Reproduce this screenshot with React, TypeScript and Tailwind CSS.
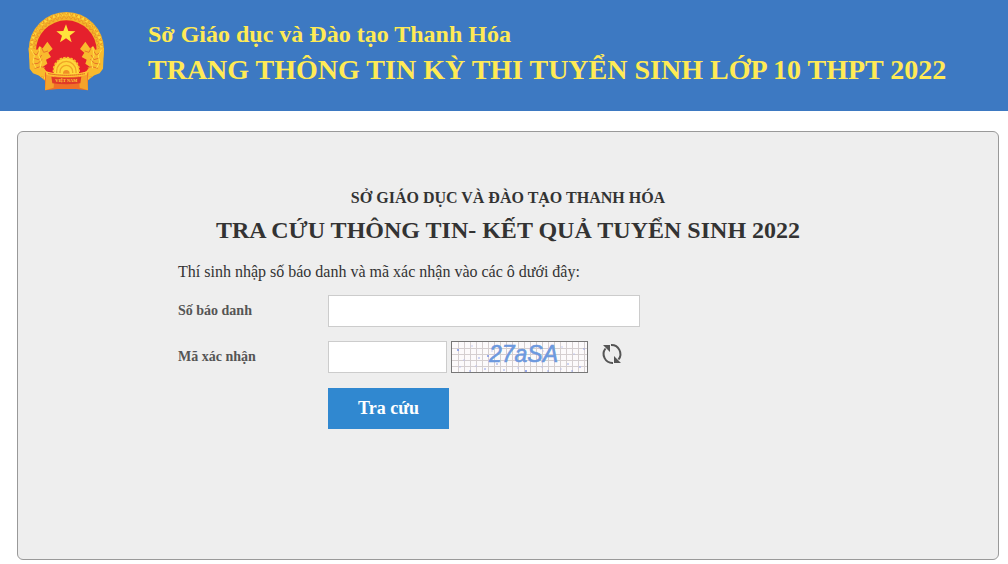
import { useState } from "react";

// Points of the captcha noise: x, y
const DOTS = [
  [6, 8], [12, 18], [20, 4], [27, 16], [33, 27], [8, 25], [18, 29], [40, 9],
  [45, 22], [52, 28], [60, 5], [66, 26], [74, 29], [82, 4], [90, 25], [96, 29],
  [103, 14], [110, 5], [116, 22], [122, 12], [128, 25], [132, 7], [109, 27],
  [91, 9], [36, 14], [55, 15], [24, 24], [120, 29], [99, 5], [70, 13],
];

function Emblem() {
  const grains = Array.from({ length: 44 }, (_, i) => i * (360 / 44));

  return (
    <svg className="h-20 w-19 shrink-0" viewBox="36 25 228 240" role="img" aria-label="Quốc huy">
      <circle cx="151" cy="138" r="113" fill="#f5b52b" />
      <circle cx="151" cy="138" r="106" fill="none" stroke="#ffd83c" strokeWidth="8" strokeDasharray="8 5" />
      {grains.map((angle) => (
        <path
          key={angle}
          d="M146 27l5 8 5-8M145 38l6 8 6-8"
          fill="none"
          stroke="#e58a24"
          strokeWidth="2"
          transform={`rotate(${angle} 151 138)`}
        />
      ))}
      <circle cx="151" cy="141" r="91" fill="#e5202c" />
      <path d="M150 62l7 20 21 1-17 13 6 20-17-12-18 12 6-20-17-13 21-1z" fill="#ffe33c" />

      {/* rice ears on both sides */}
      <g id="ear">
        <path
          d="M38 132l26 6 6-10 10 6 14-20 16 22-13 11 8 13-15 8 4 12-13 9 10 14 18 8-5 9-30-2-23-9-10-14z"
          fill="#f9ba2d"
        />
        <path
          d="M49 146l12 8 9-13M52 163l16 5 9-14M49 181l17-2 13-12M56 194l18-5 13 3M77 133l6 13 13-4"
          fill="none"
          stroke="#e8752a"
          strokeWidth="3"
        />
        <path d="M45 138l10 17-4 20 9 18M72 129l-4 26 8 20-4 19" fill="none" stroke="#ffe24b" strokeWidth="3" />
      </g>
      <use href="#ear" transform="translate(302 0) scale(-1 1)" />

      <path d="M113 216V200a38 38 0 0 1 76 0V216z" fill="#ffd83c" stroke="#f9bb2c" strokeWidth="6" strokeDasharray="7 4" />
      <path d="M122 208V202a29 29 0 0 1 58 0V208M132 208V204a19 19 0 0 1 38 0V208" fill="none" stroke="#f0a526" strokeWidth="4" />
      <path d="M141 210a10 11 0 0 1 20 0z" fill="#f08f26" />

      <path d="M87 205l19 6q46 7 92 0l19-6-2 55-36-4-53 0-39 4z" fill="#ef7027" />
      <path d="M91 207l24 10-2 35-26 8zM213 207l-24 10 2 35 25 8z" fill="#f6a32b" />
      <path d="M88 203q64 18 128 0l-4 11q-60 14-120 0z" fill="#ffc534" />
      <path d="M97 210q55 10 110 0" fill="none" stroke="#d84a20" strokeWidth="3" strokeDasharray="4 2" />
      <path d="M106 219q45 7 90 0l-3 20q-42 6-84 0z" fill="#e03a28" />
      <text
        x="151"
        y="236"
        textAnchor="middle"
        fill="#ffd33c"
        className="font-['Liberation_Serif',serif] text-[13px] font-bold"
      >
        VIỆT NAM
      </text>
    </svg>
  );
}

function Captcha() {
  return (
    <svg className="h-8 w-[137px] shrink-0 border border-[#777] bg-[#fcfafb]" viewBox="0 0 135 30" role="img" aria-label="27aSA">
      <path
        d="M6.500 0v30M12.500 0v30M18.500 0v30M24.500 0v30M30.500 0v30M36.500 0v30M42.500 0v30M48.500 0v30M54.500 0v30M60.500 0v30M66.500 0v30M72.500 0v30M78.500 0v30M84.500 0v30M90.500 0v30M96.500 0v30M102.500 0v30M108.500 0v30M114.500 0v30M120.500 0v30M126.500 0v30M132.500 0v30M0 6.500h135M0 12.500h135M0 18.500h135M0 24.500h135"
        stroke="#d5cfd0"
      />
      {DOTS.map(([x, y], i) => (
        <circle key={i} cx={x} cy={y} r={i % 4 === 0 ? 1 : 0.7} fill={i % 3 === 0 ? "#7b91e6" : "#b3bdf0"} />
      ))}
      <text
        x="37"
        y="20"
        fill="#6d99de"
        stroke="#6d99de"
        strokeWidth="0.6"
        className="font-['Liberation_Sans',sans-serif] text-[23px] italic"
      >
        27aSA
      </text>
    </svg>
  );
}

export default function App() {
  const [number, setNumber] = useState("");
  const [code, setCode] = useState("");

  return (
    <div className="bg-white font-['Liberation_Serif','Times_New_Roman',serif] text-[#333]">
      <header className="flex items-start gap-11 bg-[#3d79c2] pt-3 pr-4 pb-[19px] pl-7 text-[#ffea55]">
        <Emblem />
        <div className="pt-1 font-bold">
          <p className="text-2xl leading-9">Sở Giáo dục và Đào tạo Thanh Hóa</p>
          <h1 className="text-[28px] leading-9">TRANG THÔNG TIN KỲ THI TUYỂN SINH LỚP 10 THPT 2022</h1>
        </div>
      </header>

      <main className="mt-5 mr-[9px] mb-1 ml-[17px] rounded-md border border-[#999] bg-[#eee] px-4 pt-13 pb-[130px]">
        <form className="mx-auto max-w-[660px]" onSubmit={(e) => e.preventDefault()}>
          <div className="text-center font-bold">
            <p className="text-base leading-7">SỞ GIÁO DỤC VÀ ĐÀO TẠO THANH HÓA</p>
            <h2 className="text-2xl leading-9">TRA CỨU THÔNG TIN- KẾT QUẢ TUYỂN SINH 2022</h2>
          </div>
          <p className="mt-3 text-base leading-6">Thí sinh nhập số báo danh và mã xác nhận vào các ô dưới đây:</p>

          <div className="mt-[11px] flex items-center">
            <label htmlFor="number" className="w-[150px] text-sm font-bold text-[#555]">
              Số báo danh
            </label>
            <input
              id="number"
              className="h-8 w-[312px] border border-[#ccc] bg-white px-2 outline-none"
              value={number}
              onChange={(e) => setNumber(e.target.value)}
            />
          </div>

          <div className="mt-3.5 flex items-center">
            <label htmlFor="code" className="w-[150px] text-sm font-bold text-[#555]">
              Mã xác nhận
            </label>
            <input
              id="code"
              className="mr-1 h-8 w-[119px] border border-[#ccc] bg-white px-2 outline-none"
              value={code}
              onChange={(e) => setCode(e.target.value)}
            />
            <Captcha />
            <button type="button" aria-label="Đổi mã" className="ml-3 cursor-pointer pb-1">
              <svg className="size-6" viewBox="0 0 24 24" fill="none" stroke="#555" strokeWidth="2">
                <path d="M13 20A9 9 0 0 1 5.500 5.500M11 2A9 9 0 0 1 18.500 16.500" />
                <path d="M3 2h7v7zM21 20h-7v-7z" fill="#555" stroke="none" />
              </svg>
            </button>
          </div>

          <button
            type="submit"
            className="mt-[15px] ml-[150px] cursor-pointer bg-[#3088d0] px-[30px] py-2 text-lg leading-[25px] font-bold text-white"
          >
            Tra cứu
          </button>
        </form>
      </main>
    </div>
  );
}
